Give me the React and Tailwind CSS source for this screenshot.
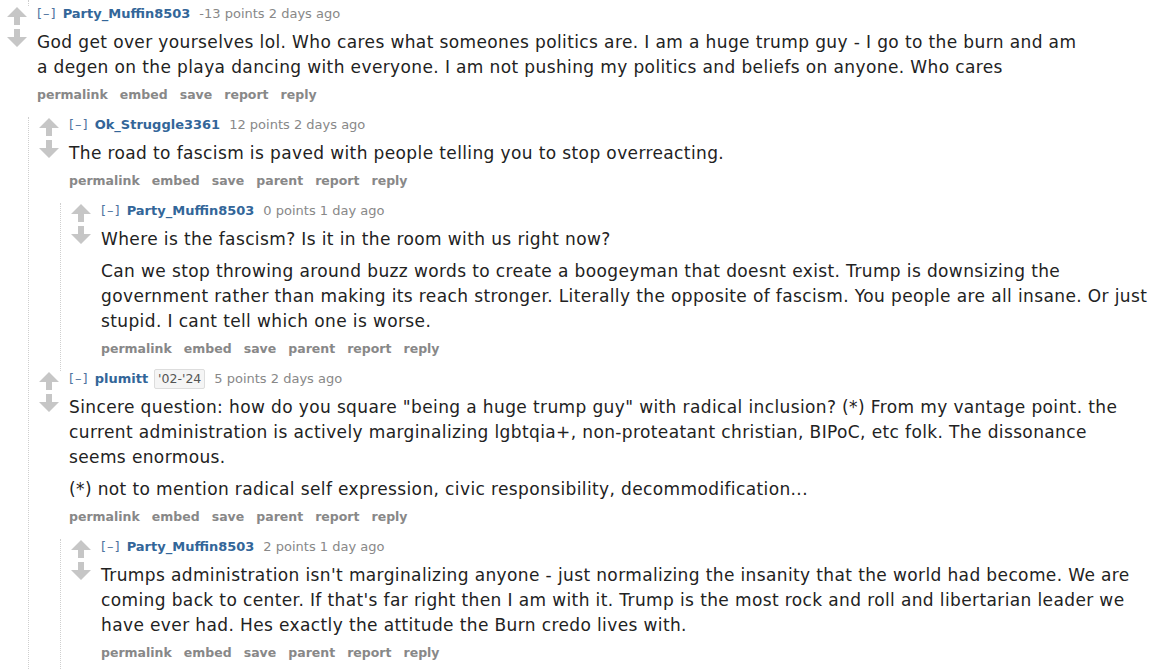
import React from 'react';

const comments = [
  {
    id: 1,
    author: 'Party_Muffin8503',
    score: '-13 points',
    time: '2 days ago',
    body: [
      'God get over yourselves lol. Who cares what someones politics are. I am a huge trump guy - I go to the burn and am a degen on the playa dancing with everyone. I am not pushing my politics and beliefs on anyone. Who cares',
    ],
    top: true,
    replies: [
      {
        id: 2,
        author: 'Ok_Struggle3361',
        score: '12 points',
        time: '2 days ago',
        body: ['The road to fascism is paved with people telling you to stop overreacting.'],
        replies: [
          {
            id: 3,
            author: 'Party_Muffin8503',
            score: '0 points',
            time: '1 day ago',
            body: [
              'Where is the fascism? Is it in the room with us right now?',
              'Can we stop throwing around buzz words to create a boogeyman that doesnt exist. Trump is downsizing the government rather than making its reach stronger. Literally the opposite of fascism. You people are all insane. Or just stupid. I cant tell which one is worse.',
            ],
            replies: [],
          },
        ],
      },
      {
        id: 4,
        author: 'plumitt',
        flair: "'02-'24",
        score: '5 points',
        time: '2 days ago',
        body: [
          'Sincere question: how do you square "being a huge trump guy" with radical inclusion? (*) From my vantage point. the current administration is actively marginalizing lgbtqia+, non-proteatant christian, BIPoC, etc folk. The dissonance seems enormous.',
          '(*) not to mention radical self expression, civic responsibility, decommodification...',
        ],
        replies: [
          {
            id: 5,
            author: 'Party_Muffin8503',
            score: '2 points',
            time: '1 day ago',
            body: [
              "Trumps administration isn't marginalizing anyone - just normalizing the insanity that the world had become. We are coming back to center. If that's far right then I am with it. Trump is the most rock and roll and libertarian leader we have ever had. Hes exactly the attitude the Burn credo lives with.",
            ],
            replies: [],
          },
        ],
      },
    ],
  },
];

const Arrow = ({ down }) => (
  <svg width="20" height="18" viewBox="0 0 20 18" className="block">
    <path
      d={down ? 'M10 18 L20 8 L13 8 L13 0 L7 0 L7 8 L0 8 Z' : 'M10 0 L20 10 L13 10 L13 18 L7 18 L7 10 L0 10 Z'}
      fill="#c6c6c6"
    />
  </svg>
);

const Comment = ({ comment }) => {
  const buttons = comment.top
    ? ['permalink', 'embed', 'save', 'report', 'reply']
    : ['permalink', 'embed', 'save', 'parent', 'report', 'reply'];

  return (
    <div className="pl-[7px]">
      <div className="flex">
        <div className="w-[20px] mr-[10px] mt-[1px] flex flex-col gap-[4px] shrink-0">
          <Arrow />
          <Arrow down />
        </div>
        <div className="min-w-0">
          <div className="h-[16px] text-[13px] leading-[16px] text-[#888] flex items-center whitespace-nowrap">
            <span className="text-[#4f74a0] tracking-[1px]">[–]</span>
            <span className="ml-[6px] font-bold text-[#336699]">{comment.author}</span>
            {comment.flair && (
              <span className="ml-[6px] px-[3px] text-[12.5px] leading-[18px] text-[#545454] bg-[#f5f5f5] border border-[#ddd] rounded-[2px]">
                {comment.flair}
              </span>
            )}
            <span className="ml-[9px]">
              {comment.score} {comment.time}
            </span>
          </div>
          <div className="mt-2 max-w-[1052px] text-[17px] tracking-[0.38px] leading-[25px] text-[#222] flex flex-col gap-[7px]">
            {comment.body.map((p, i) => (
              <p key={i}>{p}</p>
            ))}
          </div>
          <ul className="mt-[7px] mb-[14px] flex gap-[12px] text-[12.5px] leading-[16px] font-bold text-[#888]">
            {buttons.map((b) => (
              <li key={b}>{b}</li>
            ))}
          </ul>
        </div>
      </div>
      {comment.replies.length > 0 && (
        <div className="ml-[21px] pl-[3px] border-l border-dotted border-[#cfcfcf]">
          {comment.replies.map((r) => (
            <Comment key={r.id} comment={r} />
          ))}
        </div>
      )}
    </div>
  );
};

export default function App() {
  return (
    <div className="bg-white min-h-screen font-['DejaVu_Sans','Verdana',sans-serif]">
      <div className="ml-[28px] h-[6px] border-l border-dotted border-[#cfcfcf]" />
      {comments.map((c) => (
        <Comment key={c.id} comment={c} />
      ))}
    </div>
  );
}
